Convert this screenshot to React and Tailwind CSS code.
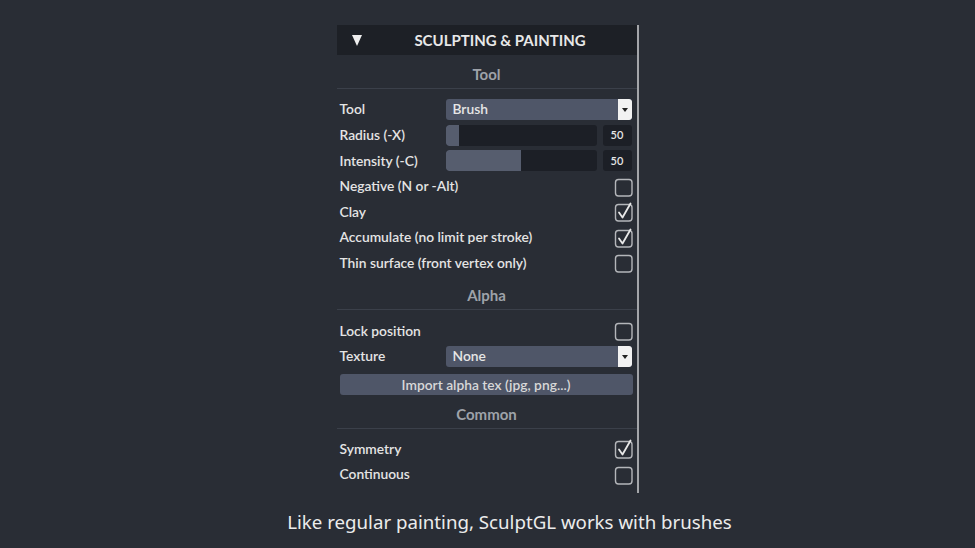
import React from 'react'

const font = { fontFamily: 'Lato, "Open Sans", sans-serif' }

const Heading = ({ children }) => (
  <div className="h-[34px] flex items-center justify-center pt-[5px] border-b border-[#3b404a] text-[15px] font-bold text-[#9ea2a9]">
    {children}
  </div>
)

const Row = ({ label, children }) => (
  <div className="h-[25.6px] flex items-center pl-[3px] pr-[5px]">
    <div className="w-[106px] shrink-0 whitespace-nowrap text-[13.8px] font-semibold text-[#e4e4e4]">{label}</div>
    <div className="flex-1 flex items-center justify-end">{children}</div>
  </div>
)

const CheckRow = ({ label, checked }) => (
  <div className="h-[25.6px] flex items-center justify-between pl-[3px] pr-[3px]">
    <span className="whitespace-nowrap text-[13.8px] font-semibold text-[#e4e4e4]">{label}</span>
    <svg width="20" height="20" viewBox="0 0 20 20" fill="none">
      <rect x="1.5" y="2.5" width="16.5" height="16.5" rx="3" stroke="#b4b6ba" strokeWidth="1.4" />
      {checked && (
        <path d="M5 10.5 L8.5 15.5 L16.5 1.5" stroke="#e8e8e8" strokeWidth="1.8" strokeLinecap="round" strokeLinejoin="round" />
      )}
    </svg>
  </div>
)

const Select = ({ value }) => (
  <div className="w-full h-[21px] rounded-[3px] bg-[#4f5668] flex items-center justify-between overflow-hidden">
    <span className="pl-[7px] text-[13.8px] font-semibold text-[#e6e6e6]">{value}</span>
    <div className="w-[14px] h-[21px] bg-[#f2f2f2] flex items-center justify-center rounded-r-[2px]">
      <div className="w-0 h-0 border-l-[3px] border-r-[3px] border-t-[4px] border-l-transparent border-r-transparent border-t-[#222]" />
    </div>
  </div>
)

const Slider = ({ fill }) => (
  <div className="w-full flex items-center gap-[6px]">
    <div className="flex-1 h-[21px] rounded-[3px] bg-[#1c1f26] overflow-hidden">
      <div className="h-full bg-[#565d6e] rounded-l-[3px]" style={{ width: fill }} />
    </div>
    <div className="w-[29px] h-[21px] rounded-[3px] bg-[#1c1f26] flex items-center justify-center text-[11px] font-semibold text-[#e6e6e6]">
      50
    </div>
  </div>
)

const App = () => {
  return (
    <div className="w-[975px] h-[548px] bg-[#292d35] flex flex-col items-center overflow-hidden" style={font}>
      <div className="w-[302px] h-[468px] mt-[25px] border-r-2 border-[#a3a5a9]">
        {/* header */}
        <div className="h-[30px] bg-[#1d2026] flex items-center">
          <div className="w-0 h-0 ml-[15px] border-l-[5.5px] border-r-[5.5px] border-t-[11px] border-l-transparent border-r-transparent border-t-[#eeeeee]" />
          <div className="flex-1 text-center pl-[2px] text-[15px] font-bold text-[#e8e8e8]">
            SCULPTING &amp; PAINTING
          </div>
        </div>

        <Heading>Tool</Heading>
        <div className="h-[8px]" />
        <Row label="Tool"><Select value="Brush" /></Row>
        <Row label="Radius (-X)"><Slider fill="9%" /></Row>
        <Row label="Intensity (-C)"><Slider fill="50%" /></Row>
        <CheckRow label="Negative (N or -Alt)" />
        <CheckRow label="Clay" checked />
        <CheckRow label="Accumulate (no limit per stroke)" checked />
        <CheckRow label="Thin surface (front vertex only)" />

        <Heading>Alpha</Heading>
        <div className="h-[8px]" />
        <CheckRow label="Lock position" />
        <Row label="Texture"><Select value="None" /></Row>
        <div className="pl-[3px] pr-[4px] pt-[5px]">
          <div className="h-[21px] rounded-[3px] bg-[#4f5668] flex items-center justify-center text-[13.8px] font-semibold text-[#d8d8d8]">
            Import alpha tex (jpg, png...)
          </div>
        </div>

        <Heading>Common</Heading>
        <div className="h-[7px]" />
        <CheckRow label="Symmetry" checked />
        <CheckRow label="Continuous" />
      </div>

      <div className="mt-[15px] ml-[44px] text-[18.7px] text-[#ececec]" style={{ fontFamily: '"Noto Sans", sans-serif' }}>
        Like regular painting, SculptGL works with brushes
      </div>
    </div>
  )
}

export default App
